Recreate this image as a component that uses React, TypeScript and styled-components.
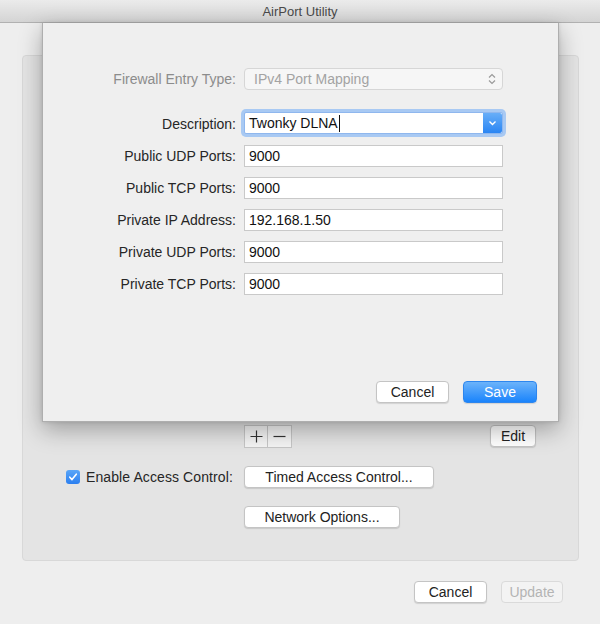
import React from "react";
import styled, { createGlobalStyle } from "styled-components";

const Global = createGlobalStyle`
  html, body { margin: 0; padding: 0; }
  body { width: 600px; height: 624px; overflow: hidden; font-family: "Liberation Sans", Arial, sans-serif; }
  * { box-sizing: border-box; }
`;

const Window = styled.div`
  position: relative;
  width: 600px;
  height: 624px;
  background: #eeeeee;
  display: flex;
  flex-direction: column;
`;

const TitleBar = styled.div`
  height: 23px;
  flex: none;
  background: linear-gradient(#ebebeb, #d4d4d4);
  border-bottom: 1px solid #b1b1b1;
  display: flex;
  align-items: center;
  justify-content: center;
  font-size: 13px;
  color: #4a4a4a;
`;

const Content = styled.div`
  padding: 32px 21px 0 22px;
`;

const Panel = styled.div`
  height: 506px;
  background: #e4e4e4;
  border: 1px solid #d8d8d8;
  border-radius: 4px;
  padding: 16px 42px 0 43px;
  display: grid;
  grid-template-columns: 170px 1fr;
  column-gap: 8px;
  align-content: start;
`;

const TableArea = styled.div`
  grid-column: 1 / -1;
  height: 352px;
`;

const TableTools = styled.div`
  grid-column: 2;
  display: flex;
  justify-content: space-between;
  align-items: flex-start;
  margin-top: 1px;
`;

const Segments = styled.div`
  display: flex;
  border: 1px solid #c6c6c6;
  background: #f4f4f4;
`;

const Segment = styled.div<{ $last?: boolean }>`
  width: 23px;
  height: 21px;
  display: flex;
  align-items: center;
  justify-content: center;
  border-right: ${(p) => (p.$last ? "none" : "1px solid #c6c6c6")};
`;

const Button = styled.div<{ $w: number; $disabled?: boolean; $primary?: boolean }>`
  width: ${(p) => p.$w}px;
  height: 22px;
  border-radius: 4px;
  display: flex;
  align-items: center;
  justify-content: center;
  font-size: 14px;
  color: ${(p) => (p.$disabled ? "#b4b4b4" : p.$primary ? "#ffffff" : "#222222")};
  background: ${(p) =>
    p.$primary ? "linear-gradient(#6cb3fa, #1a84fc)" : p.$disabled ? "#f3f3f3" : "#ffffff"};
  border: 1px solid ${(p) => (p.$primary ? "#2d86ee" : p.$disabled ? "#dadada" : "#c4c4c4")};
  box-shadow: ${(p) => (p.$disabled ? "none" : "0 1px 1px rgba(0,0,0,0.12)")};
  flex: none;
`;

const AccessLabel = styled.div`
  grid-column: 1;
  display: flex;
  align-items: center;
  gap: 6px;
  font-size: 14px;
  letter-spacing: 0.1px;
  color: #262626;
  margin-top: 18px;
  height: 22px;
`;

const Check = styled.div`
  width: 14px;
  height: 14px;
  border-radius: 3px;
  background: linear-gradient(#5aa6f8, #2b7ff0);
  display: flex;
  align-items: center;
  justify-content: center;
`;

const ControlCell = styled.div<{ $top: number }>`
  grid-column: 2;
  margin-top: ${(p) => p.$top}px;
`;

const Footer = styled.div`
  display: flex;
  justify-content: flex-end;
  gap: 14px;
  padding: 20px 37px 0 0;
`;

const Sheet = styled.div`
  position: absolute;
  top: 23px;
  left: 42px;
  width: 517px;
  height: 399px;
  background: #efefef;
  border: 1px solid #aeaeae;
  border-top: none;
  box-shadow: 0 8px 22px rgba(0, 0, 0, 0.3), 0 0 4px rgba(0, 0, 0, 0.12);
  display: flex;
  flex-direction: column;
  padding: 45px 21px 18px 20px;
`;

const Form = styled.div`
  display: grid;
  grid-template-columns: 173px 259px;
  column-gap: 8px;
  row-gap: 10px;
  align-items: center;
`;

const Label = styled.div<{ $dim?: boolean; $gapAfter?: number }>`
  text-align: right;
  font-size: 14px;
  color: ${(p) => (p.$dim ? "#8c8c8c" : "#262626")};
  margin-bottom: ${(p) => p.$gapAfter ?? 0}px;
`;

const Popup = styled.div`
  height: 22px;
  border: 1px solid #d6d6d6;
  border-radius: 4px;
  background: #f6f6f6;
  display: flex;
  align-items: center;
  justify-content: space-between;
  padding: 0 6px 0 9px;
  font-size: 14px;
  color: #a3a3a3;
  margin-bottom: 12px;
`;

const Combo = styled.div`
  height: 22px;
  display: flex;
  background: #ffffff;
  border: 1px solid #8fb7ee;
  border-radius: 2px;
  box-shadow: 0 0 0 3px #a8c9f3;
  margin-bottom: 1px;
`;

const ComboText = styled.div`
  flex: 1;
  display: flex;
  align-items: center;
  padding-left: 4px;
  font-size: 14px;
  color: #111111;
`;

const Caret = styled.span`
  display: inline-block;
  width: 1px;
  height: 17px;
  background: #111;
  margin-left: 1px;
`;

const ComboArrow = styled.div`
  width: 19px;
  background: linear-gradient(#68aef8, #2a85f3);
  border-radius: 0 2px 2px 0;
  display: flex;
  align-items: center;
  justify-content: center;
`;

const Field = styled.div`
  height: 22px;
  background: #ffffff;
  border: 1px solid #c9c9c9;
  display: flex;
  align-items: center;
  padding-left: 4px;
  font-size: 14px;
  color: #111111;
`;

const SheetButtons = styled.div`
  margin-top: auto;
  display: flex;
  justify-content: flex-end;
  gap: 14px;
`;

const rows: [string, string][] = [
  ["Public UDP Ports:", "9000"],
  ["Public TCP Ports:", "9000"],
  ["Private IP Address:", "192.168.1.50"],
  ["Private UDP Ports:", "9000"],
  ["Private TCP Ports:", "9000"],
];

export default function App() {
  return (
    <>
      <Global />
      <Window>
        <TitleBar>AirPort Utility</TitleBar>
        <Content>
          <Panel>
            <TableArea />
            <TableTools>
              <Segments>
                <Segment>
                  <svg width="13" height="13" viewBox="0 0 13 13">
                    <path d="M6.5 0.5v12M0.5 6.5h12" stroke="#333" strokeWidth="1.2" />
                  </svg>
                </Segment>
                <Segment $last>
                  <svg width="13" height="13" viewBox="0 0 13 13">
                    <path d="M0.5 6.5h12" stroke="#333" strokeWidth="1.2" />
                  </svg>
                </Segment>
              </Segments>
              <Button $w={46}>Edit</Button>
            </TableTools>
            <AccessLabel>
              <Check>
                <svg width="10" height="10" viewBox="0 0 10 10">
                  <path d="M1.8 5.2l2.2 2.4 4.3-5.4" stroke="#fff" strokeWidth="1.6" fill="none" strokeLinecap="round" strokeLinejoin="round" />
                </svg>
              </Check>
              Enable Access Control:
            </AccessLabel>
            <ControlCell $top={18}>
              <Button $w={190}>Timed Access Control...</Button>
            </ControlCell>
            <ControlCell $top={18}>
              <Button $w={156}>Network Options...</Button>
            </ControlCell>
          </Panel>
        </Content>
        <Footer>
          <Button $w={73}>Cancel</Button>
          <Button $w={62} $disabled>Update</Button>
        </Footer>

        <Sheet>
          <Form>
            <Label $dim $gapAfter={12}>Firewall Entry Type:</Label>
            <Popup>
              IPv4 Port Mapping
              <svg width="8" height="12" viewBox="0 0 8 12">
                <path d="M1 4.5L4 1.5l3 3M1 7.5l3 3 3-3" stroke="#9a9a9a" strokeWidth="1.2" fill="none" />
              </svg>
            </Popup>
            <Label>Description:</Label>
            <Combo>
              <ComboText>
                Twonky DLNA<Caret />
              </ComboText>
              <ComboArrow>
                <svg width="9" height="6" viewBox="0 0 9 6">
                  <path d="M1.5 1.5l3 3 3-3" stroke="#fff" strokeWidth="1.4" fill="none" />
                </svg>
              </ComboArrow>
            </Combo>
            {rows.map(([l, v]) => (
              <React.Fragment key={l}>
                <Label>{l}</Label>
                <Field>{v}</Field>
              </React.Fragment>
            ))}
          </Form>
          <SheetButtons>
            <Button $w={73}>Cancel</Button>
            <Button $w={74} $primary>Save</Button>
          </SheetButtons>
        </Sheet>
      </Window>
    </>
  );
}
